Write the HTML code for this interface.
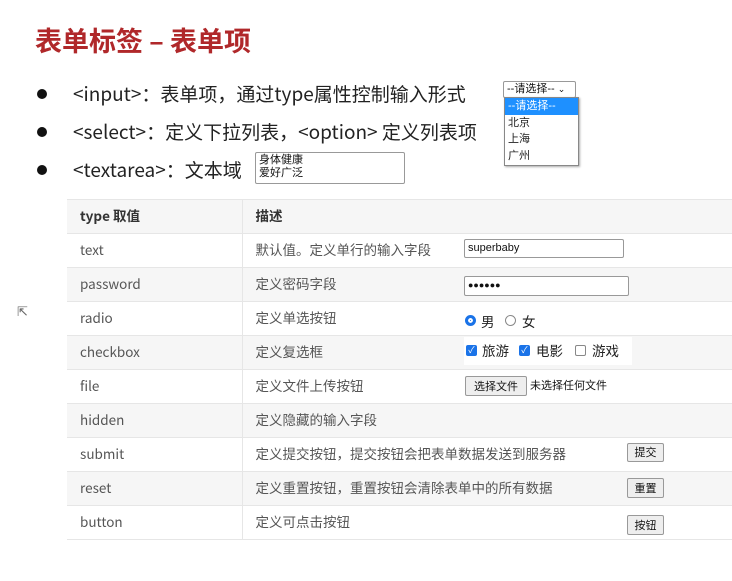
<!DOCTYPE html>
<html><head><meta charset="utf-8"><style>
body{margin:0;width:732px;height:581px;background:#fff;font-family:"Liberation Sans","Noto Sans CJK SC",sans-serif;position:relative;overflow:hidden;color:#333}
.a{position:absolute;white-space:nowrap}
h1{position:absolute;left:35px;top:22px;margin:0;font-size:27px;line-height:36px;color:#b0282a;font-weight:bold;font-family:"Noto Sans CJK SC",sans-serif}
.b{font-size:19px;line-height:24px;color:#222;font-family:"Noto Sans CJK SC",sans-serif}
.dot{position:absolute;width:10px;height:10px;border-radius:50%;background:#111}
table{position:absolute;left:67px;top:199px;border-collapse:collapse;width:680px;font-family:"Noto Sans CJK SC",sans-serif;font-size:13.5px;color:#555;border-bottom:1px solid #e6e6e6}
td{height:33px;line-height:30px;border-top:1px solid #e6e6e6;padding:0 0 3px 13px;vertical-align:middle;box-sizing:border-box}
td:first-child{width:175px;border-right:1px solid #e6e6e6}
tr:nth-child(odd) td{background:#f6f6f6}
tr:first-child td{font-weight:bold;color:#333}
.inp{position:absolute;border:1px solid #999;border-radius:2px;background:#fff;font-size:11px;color:#111;padding-left:3px;box-sizing:border-box}
.btn{position:absolute;border:1px solid #999;border-radius:2px;background:#eee;font-size:11px;color:#111;text-align:center;box-sizing:border-box;font-family:"Noto Sans CJK SC",sans-serif}
.s{font-family:"Noto Sans CJK SC",sans-serif;font-size:13.5px;line-height:18px;color:#222}
</style></head><body>
<h1>表单标签 – 表单项</h1>
<div class="dot" style="left:37px;top:89px"></div>
<div class="dot" style="left:37px;top:127px"></div>
<div class="dot" style="left:37px;top:165px"></div>
<div class="a b" style="left:73px;top:82px">&lt;input&gt;：表单项，通过type属性控制输入形式</div>
<div class="a b" style="left:73px;top:120px">&lt;select&gt;：定义下拉列表，&lt;option&gt; 定义列表项</div>
<div class="a b" style="left:73px;top:158px">&lt;textarea&gt;：文本域</div>
<div class="inp" style="left:255px;top:152px;width:150px;height:32px;font-size:11px;line-height:13px;padding:1px 3px;white-space:pre">身体健康
爱好广泛</div>
<div class="inp" style="left:503px;top:81px;width:73px;height:17px;line-height:15px;font-size:11px">--请选择-- <span style="font-size:9px">⌄</span></div>
<div class="a" style="left:504px;top:97px;width:73px;height:67px;border:1px solid #888;background:#fff;font-size:11px;line-height:16.5px;color:#222;box-shadow:1px 1px 2px #aaa">
<div style="background:#1e90ff;color:#fff;padding-left:3px">--请选择--</div>
<div style="padding-left:3px">北京</div><div style="padding-left:3px">上海</div><div style="padding-left:3px">广州</div></div>
<div class="a" style="left:17px;top:304px;font-size:13px;color:#666">⇱</div>
<table>
<tr><td>type 取值</td><td>描述</td></tr>
<tr><td>text</td><td>默认值。定义单行的输入字段</td></tr>
<tr><td>password</td><td>定义密码字段</td></tr>
<tr><td>radio</td><td>定义单选按钮</td></tr>
<tr><td>checkbox</td><td>定义复选框</td></tr>
<tr><td>file</td><td>定义文件上传按钮</td></tr>
<tr><td>hidden</td><td>定义隐藏的输入字段</td></tr>
<tr><td>submit</td><td>定义提交按钮，提交按钮会把表单数据发送到服务器</td></tr>
<tr><td>reset</td><td>定义重置按钮，重置按钮会清除表单中的所有数据</td></tr>
<tr><td>button</td><td>定义可点击按钮</td></tr>
</table>
<div class="inp" style="left:464px;top:239px;width:160px;height:19px;line-height:17px">superbaby</div>
<div class="inp" style="left:464px;top:276px;width:165px;height:20px;line-height:16px;font-size:9px">●●●●●●</div>
<div class="a" style="left:465px;top:315px;width:11px;height:11px;border-radius:50%;background:#1a73e8;box-sizing:border-box;border:3px solid #1a73e8;box-shadow:inset 0 0 0 2px #fff"></div>
<div class="a s" style="left:481px;top:312px">男</div>
<div class="a" style="left:505px;top:315px;width:11px;height:11px;border-radius:50%;border:1px solid #888;box-sizing:border-box"></div>
<div class="a s" style="left:522px;top:312px">女</div>
<div class="a" style="left:464px;top:337px;width:168px;height:28px;background:#fff"></div>
<div class="a" style="left:466px;top:345px;width:11px;height:11px;border-radius:2px;background:#1a73e8;color:#fff;font-size:9px;line-height:11px;text-align:center">✓</div>
<div class="a s" style="left:482px;top:341px">旅游</div>
<div class="a" style="left:519px;top:345px;width:11px;height:11px;border-radius:2px;background:#1a73e8;color:#fff;font-size:9px;line-height:11px;text-align:center">✓</div>
<div class="a s" style="left:536px;top:341px">电影</div>
<div class="a" style="left:575px;top:345px;width:11px;height:11px;border-radius:2px;border:1px solid #888;box-sizing:border-box"></div>
<div class="a s" style="left:592px;top:341px">游戏</div>
<div class="btn" style="left:465px;top:376px;width:62px;height:20px;line-height:18px">选择文件</div>
<div class="a" style="left:530px;top:378px;font-size:11px;line-height:15px;color:#111;font-family:'Noto Sans CJK SC',sans-serif">未选择任何文件</div>
<div class="btn" style="left:627px;top:443px;width:37px;height:19px;line-height:17px">提交</div>
<div class="btn" style="left:627px;top:478px;width:37px;height:20px;line-height:18px">重置</div>
<div class="btn" style="left:627px;top:515px;width:37px;height:20px;line-height:18px">按钮</div>
</body></html>
